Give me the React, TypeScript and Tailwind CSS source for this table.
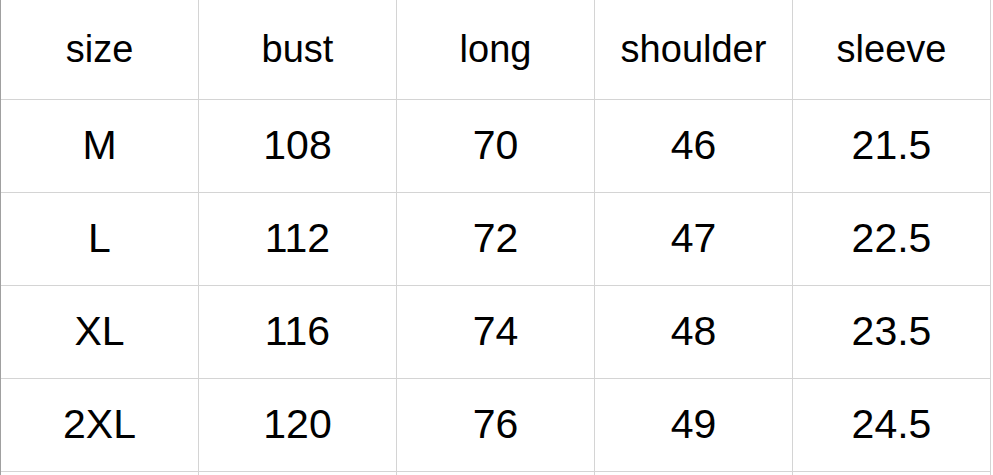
const headers = ["size", "bust", "long", "shoulder", "sleeve"];

const rows = [
  ["M", "108", "70", "46", "21.5"],
  ["L", "112", "72", "47", "22.5"],
  ["XL", "116", "74", "48", "23.5"],
  ["2XL", "120", "76", "49", "24.5"],
  ["", "", "", "", ""],
];

export default function App() {
  return (
    <div className="w-[993px] h-[475px] overflow-hidden bg-white font-['Liberation_Sans',Arial,sans-serif] text-black">
      <div className="grid grid-cols-[repeat(5,198px)] border-l border-[#a0a0a0] w-fit">
        {headers.map((h) => (
          <div
            key={h}
            className="h-[100px] flex items-center justify-center border-r border-b border-[#d4d4d4] text-[38px]"
          >
            {h}
          </div>
        ))}
        {rows.map((row, i) =>
          row.map((cell, j) => (
            <div
              key={`${i}-${j}`}
              className="h-[93px] flex items-center justify-center border-r border-b border-[#d4d4d4] text-[41px]"
            >
              {cell}
            </div>
          ))
        )}
      </div>
    </div>
  );
}
